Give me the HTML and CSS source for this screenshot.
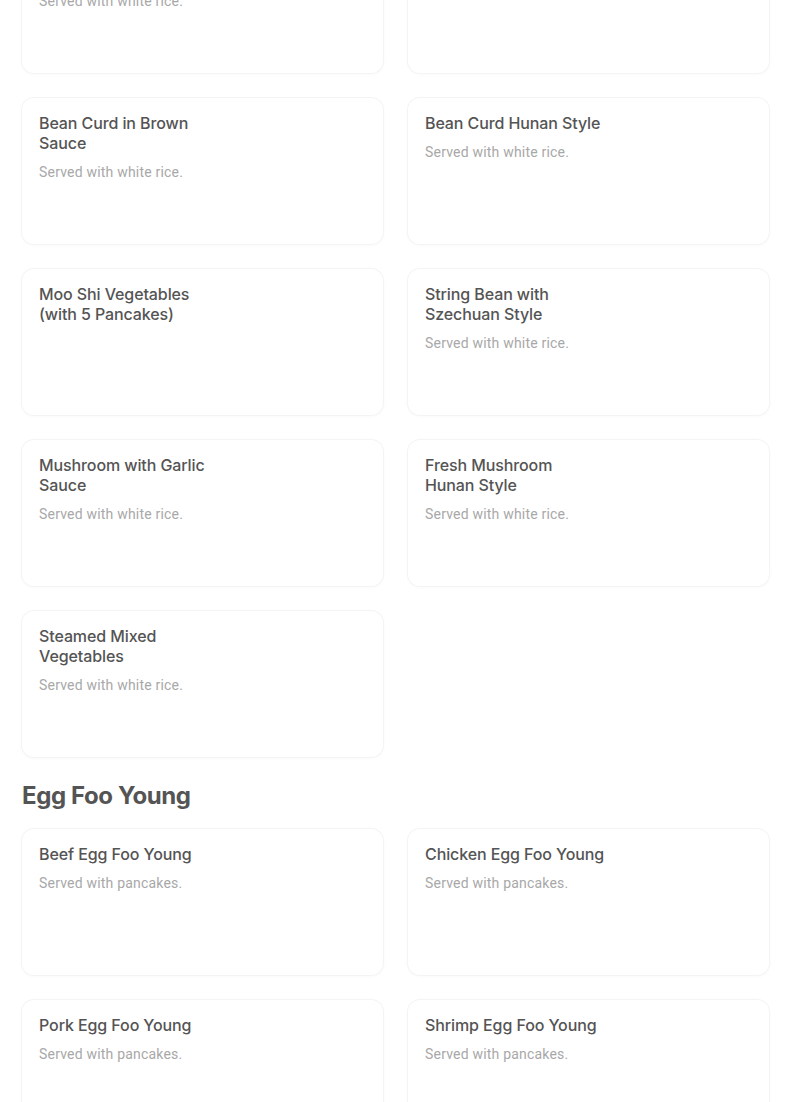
FILE: index.html
```html
<!DOCTYPE html>
<html lang="en">
<head>
<meta charset="utf-8">
<title>Menu</title>
<link rel="stylesheet" href="styles.css">
</head>
<body>
<main class="menu">
  <section class="category category-scrolled">
    <div class="grid">
      <article class="card">
        <h3 class="title">Broccoli with Garlic Sauce</h3>
        <p class="desc">Served with white rice.</p>
      </article>
      <article class="card">
        <h3 class="title">Mixed Vegetables</h3>
        <p class="desc">Served with white rice.</p>
      </article>
      <article class="card">
        <h3 class="title">Bean Curd in Brown Sauce</h3>
        <p class="desc">Served with white rice.</p>
      </article>
      <article class="card">
        <h3 class="title">Bean Curd Hunan Style</h3>
        <p class="desc">Served with white rice.</p>
      </article>
      <article class="card">
        <h3 class="title">Moo Shi Vegetables (with 5 Pancakes)</h3>
      </article>
      <article class="card">
        <h3 class="title">String Bean with Szechuan Style</h3>
        <p class="desc">Served with white rice.</p>
      </article>
      <article class="card">
        <h3 class="title">Mushroom with Garlic Sauce</h3>
        <p class="desc">Served with white rice.</p>
      </article>
      <article class="card">
        <h3 class="title">Fresh Mushroom <span class="nowrap">Hunan Style</span></h3>
        <p class="desc">Served with white rice.</p>
      </article>
      <article class="card">
        <h3 class="title">Steamed Mixed Vegetables</h3>
        <p class="desc">Served with white rice.</p>
      </article>
    </div>
  </section>
  <section class="category">
    <h2 class="heading">Egg Foo Young</h2>
    <div class="grid">
      <article class="card">
        <h3 class="title">Beef Egg Foo Young</h3>
        <p class="desc">Served with pancakes.</p>
      </article>
      <article class="card">
        <h3 class="title">Chicken Egg Foo Young</h3>
        <p class="desc">Served with pancakes.</p>
      </article>
      <article class="card">
        <h3 class="title">Pork Egg Foo Young</h3>
        <p class="desc">Served with pancakes.</p>
      </article>
      <article class="card">
        <h3 class="title">Shrimp Egg Foo Young</h3>
        <p class="desc">Served with pancakes.</p>
      </article>
    </div>
  </section>
</main>
</body>
</html>
```

FILE: styles.css
```css
html, body {
  margin: 0;
  padding: 0;
  background: #ffffff;
}

body {
  font-family: Roboto, "Liberation Sans", sans-serif;
  color: #545454;
  overflow: hidden;
}

.menu {
  width: 747px;
  padding-left: 22px;
}

.category-scrolled {
  margin-top: -73px;
}

.grid {
  display: grid;
  grid-template-columns: 1fr 1fr;
  column-gap: 25px;
  row-gap: 25px;
}

.card {
  height: 146px;
  box-sizing: border-box;
  padding: 15px 17px;
  border-radius: 12px;
  background: #ffffff;
  box-shadow: 0 0 0 1px #f4f4f4, 0 1px 4px rgba(0, 0, 0, 0.035);
}

.title {
  margin: 0;
  max-width: 184px;
  font-family: Inter, Roboto, sans-serif;
  font-size: 16px;
  line-height: 20px;
  font-weight: 500;
  letter-spacing: -0.1px;
  color: #545454;
}

.nowrap {
  white-space: nowrap;
}

.desc {
  margin: 9px 0 0;
  font-size: 14px;
  line-height: 20px;
  font-weight: 400;
  letter-spacing: 0.2px;
  color: #a8a8a8;
}

.heading {
  margin: 23px 0 17px;
  font-family: Inter, "Liberation Sans", sans-serif;
  font-size: 24px;
  line-height: 32px;
  font-weight: 700;
  letter-spacing: -0.4px;
  color: #545454;
}
```
